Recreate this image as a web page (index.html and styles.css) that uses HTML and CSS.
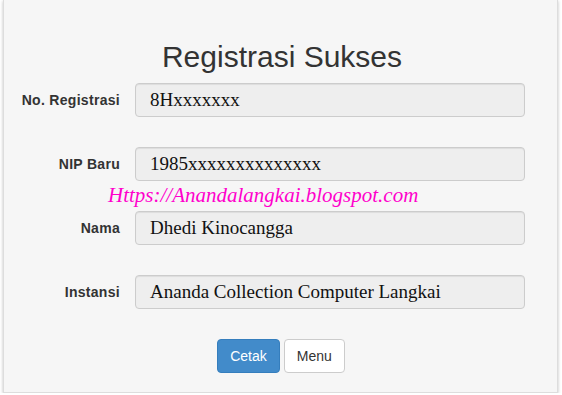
FILE: index.html
```html
<!DOCTYPE html>
<html lang="id">
<head>
    <meta charset="UTF-8">
    <meta name="viewport" content="width=device-width, initial-scale=1.0">
    <title>Registrasi Sukses</title>
    <link rel="stylesheet" href="styles.css">
</head>
<body>

<div class="panel">
    <h2 class="title">Registrasi Sukses</h2>

    <div class="form-horizontal">
        <div class="form-group">
            <label class="control-label">No. Registrasi</label>
            <div class="form-control">8Hxxxxxxx</div>
        </div>
        <div class="form-group">
            <label class="control-label">NIP Baru</label>
            <div class="form-control">1985xxxxxxxxxxxxxx</div>
        </div>
        <div class="form-group">
            <label class="control-label">Nama</label>
            <div class="form-control">Dhedi Kinocangga</div>
        </div>
        <div class="form-group">
            <label class="control-label">Instansi</label>
            <div class="form-control">Ananda Collection Computer Langkai</div>
        </div>

        <!-- watermark di atas form -->
        <div class="watermark">Https://Anandalangkai.blogspot.com</div>
    </div>

    <div class="actions">
        <button class="btn btn-primary">Cetak</button>
        <button class="btn btn-default">Menu</button>
    </div>
</div>

</body>
</html>
```

FILE: styles.css
```css
body {
    margin: 0;
    padding: 0;
    background-color: #fff;
    font-family: "Liberation Sans", Arial, sans-serif;
    color: #333;
}

.panel {
    margin-left: 3px;
    width: 555px;
    height: 393px;
    box-sizing: border-box;
    background-color: #f6f6f6;
    border: 1px solid #ddd;
    border-top: none;
    box-shadow: 0 1px 3px rgba(0, 0, 0, 0.25);
    padding-top: 39px;
}

.title {
    margin: 0 0 8px 0;
    padding-left: 3px;
    text-align: center;
    font-size: 30px;
    font-weight: normal;
    line-height: 36px;
    color: #333;
}

.form-horizontal {
    position: relative;
}

.form-group {
    display: flex;
    align-items: center;
    height: 34px;
    margin-bottom: 30px;
}

.control-label {
    width: 116px;
    padding-right: 15px;
    text-align: right;
    font-size: 14px;
    letter-spacing: 0.3px;
    font-weight: bold;
    color: #333;
}

.form-control {
    width: 390px;
    height: 34px;
    box-sizing: border-box;
    padding: 0 14px;
    display: flex;
    align-items: center;
    background-color: #eee;
    border: 1px solid #ccc;
    border-radius: 4px;
    box-shadow: inset 0 1px 1px rgba(0, 0, 0, 0.075);
    font-family: "Liberation Serif", "Times New Roman", serif;
    font-size: 19px;
    color: #111;
}

.watermark {
    position: absolute;
    left: 104px;
    top: 100px;
    font-family: "Liberation Serif", serif;
    font-style: italic;
    font-size: 21px;
    color: #f0c;
}

.actions {
    display: flex;
    justify-content: center;
    gap: 4px;
    padding-left: 1px;
}

.btn {
    height: 34px;
    padding: 6px 12px;
    font-family: "Liberation Sans", Arial, sans-serif;
    font-size: 14px;
    border-radius: 4px;
    border: 1px solid #ccc;
    cursor: pointer;
}

.btn-primary {
    background-color: #428bca;
    border-color: #357ebd;
    color: #fff;
}

.btn-default {
    background-color: #fff;
    color: #333;
}
```
